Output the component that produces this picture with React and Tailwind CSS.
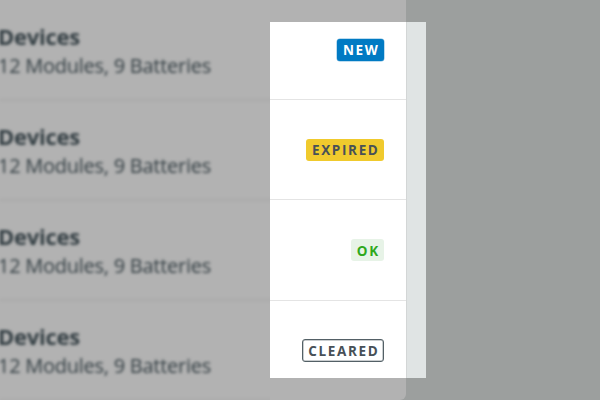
const rows = [
  { label: 'NEW', style: 'h-[22px] bg-[#007ac3] text-white w-[47px] shadow-[0_0_0_0.5px_#7cb9df]' },
  { label: 'EXPIRED', style: 'h-[22px] bg-[#f0ca2d] text-[#475057] w-[78px] pt-px' },
  { label: 'OK', style: 'h-[22px] bg-[#e7f3e7] text-[#2fa81c] w-[33px] pt-px' },
  { label: 'CLEARED', style: '-mt-px h-[23px] bg-white text-[#475057] border border-[#536066] shadow-[inset_0_0_0_0.5px_#939ca0] w-[82px] pt-0.5' },
];

export default function App() {
  return (
    <div className="flex h-[400px] w-[600px] overflow-hidden bg-[#9c9f9e] font-['Open_Sans',sans-serif]">
      <div className="w-[270px] shrink-0 bg-[#b2b2b2]">
        {rows.map(({ label }) => (
          <div key={label} className="h-[100.15px] pt-[21px] text-[#333e43]">
            <div className="h-[79.5px] w-[274px] border-b-2 border-[#aaa] blur-[1.4px]">
              <div className="-ml-0.5 text-[22px] leading-[30px] font-bold tracking-[-0.25px]">Devices</div>
              <div className="-ml-0.5 text-[20px] leading-[29px] tracking-[-0.26px] whitespace-nowrap">12 Modules, 9 Batteries</div>
            </div>
          </div>
        ))}
      </div>
      <div className="z-10 flex w-[136px] shrink-0 flex-col rounded-br-md bg-[#b2b2b2] py-[22px]">
        <div className="flex h-[356px] flex-col overflow-hidden bg-white">
          {rows.map(({ label, style }, i) => (
            <div key={label} className={`flex shrink-0 items-start justify-end border-b border-[#e4e4e4] pr-[22px] ${i === 0 ? 'h-[78px] pt-[17px]' : 'h-[100.3px] pt-[39px]'}`}>
              <span className={`flex items-center justify-center rounded-[3px] pl-[1.5px] text-[13.5px] font-bold tracking-[1.65px] ${style}`}>{label}</span>
            </div>
          ))}
        </div>
      </div>
      <div className="my-[22px] w-5 border-l border-[#d3d6d6] bg-[#e0e4e4]" />
    </div>
  );
}
